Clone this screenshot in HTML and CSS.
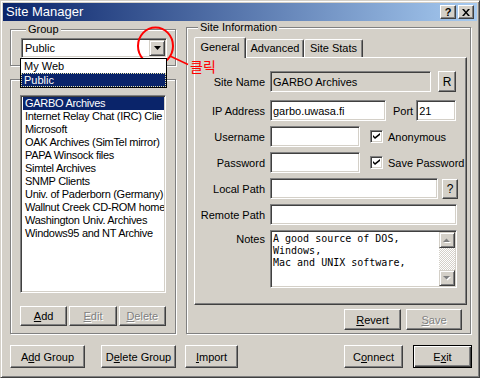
FILE: index.html
```html
<!DOCTYPE html>
<html lang="en">
<head>
    <meta charset="UTF-8">
    <title>Site Manager</title>
    <link rel="stylesheet" href="styles.css">
</head>
<body>
    <div class="window">
        <div class="titlebar">
            <span class="title">Site Manager</span>
            <div class="title-buttons">
                <span class="tbtn help">?</span>
                <span class="tbtn close">
                    <svg width="8" height="7" viewBox="0 0 8 7"><path d="M0 0h2l2 2.5L6 0h2L5 3.5 8 7H6L4 4.5 2 7H0l3-3.5z" fill="#000"/></svg>
                </span>
            </div>
        </div>

        <div class="client">
            <div class="panes">
                <div class="left">
                    <fieldset class="group group-top">
                        <legend>Group</legend>
                        <div class="combo">
                            <span class="combo-text">Public</span>
                            <span class="combo-btn">
                                <svg width="7" height="4" viewBox="0 0 7 4"><path d="M0 0h7L3.5 4z" fill="#000"/></svg>
                            </span>
                            <ul class="combo-list">
                                <li>My Web</li>
                                <li class="sel">Public</li>
                            </ul>
                        </div>
                    </fieldset>

                    <fieldset class="group group-sites">
                        <ul class="listbox">
                            <li class="sel">GARBO Archives</li>
                            <li>Internet Relay Chat (IRC) Clie</li>
                            <li>Microsoft</li>
                            <li>OAK Archives (SimTel mirror)</li>
                            <li>PAPA Winsock files</li>
                            <li>Simtel Archives</li>
                            <li>SNMP Clients</li>
                            <li>Univ. of Paderborn (Germany)</li>
                            <li>Wallnut Creek CD-ROM home</li>
                            <li>Washington Univ. Archives</li>
                            <li>Windows95 and NT Archive</li>
                        </ul>
                        <div class="list-buttons">
                            <button class="btn"><u>A</u>dd</button>
                            <button class="btn disabled"><u>E</u>dit</button>
                            <button class="btn disabled"><u>D</u>elete</button>
                        </div>
                    </fieldset>
                </div>

                <fieldset class="group site-info">
                    <legend>Site Information</legend>
                    <div class="tabs">
                        <span class="tab active tab-general">General</span>
                        <span class="tab tab-advanced">Advanced</span>
                        <span class="tab tab-stats">Site Stats</span>
                    </div>
                    <div class="tab-panel">
                        <div class="row first">
                            <label class="lbl">Site Name</label>
                            <input class="edit readonly w-name" value="GARBO Archives" readonly>
                            <button class="btn small btn-r">R</button>
                        </div>
                        <div class="row">
                            <label class="lbl">IP Address</label>
                            <input class="edit w-ip" value="garbo.uwasa.fi">
                            <label class="port-lbl">Port</label>
                            <input class="edit w-port" value="21">
                        </div>
                        <div class="row">
                            <label class="lbl">Username</label>
                            <input class="edit w-user" value="">
                            <span class="check">
                                <span class="box"><svg width="7" height="7" viewBox="0 0 7 7"><path d="M0 2l2 2 5-4v2L2 6 0 4z" fill="#000"/></svg></span>
                                Anonymous
                            </span>
                        </div>
                        <div class="row">
                            <label class="lbl">Password</label>
                            <input class="edit w-user" value="">
                            <span class="check">
                                <span class="box"><svg width="7" height="7" viewBox="0 0 7 7"><path d="M0 2l2 2 5-4v2L2 6 0 4z" fill="#000"/></svg></span>
                                Save Password
                            </span>
                        </div>
                        <div class="row">
                            <label class="lbl">Local Path</label>
                            <input class="edit w-local" value="">
                            <button class="btn small btn-q">?</button>
                        </div>
                        <div class="row">
                            <label class="lbl">Remote Path</label>
                            <input class="edit w-remote" value="">
                        </div>
                        <div class="row notes-row">
                            <label class="lbl">Notes</label>
                            <div class="notes">
                                <div class="notes-text">A good source of DOS,<br>Windows,<br>Mac and UNIX software,</div>
                                <div class="vscroll">
                                    <span class="sb-btn">
                                        <svg width="8" height="5" viewBox="0 0 8 5"><path d="M1 5h7L4.5 1.5z" fill="#fff"/><path d="M0 4h7L3.5 0.5z" fill="#808080"/></svg>
                                    </span>
                                    <span class="sb-track"></span>
                                    <span class="sb-btn">
                                        <svg width="8" height="5" viewBox="0 0 8 5"><path d="M1 1h7L4.5 4.5z" fill="#fff"/><path d="M0 0h7L3.5 3.5z" fill="#808080"/></svg>
                                    </span>
                                </div>
                            </div>
                        </div>
                    </div>
                    <div class="panel-buttons">
                        <button class="btn w-revert"><u>R</u>evert</button>
                        <button class="btn disabled w-save"><u>S</u>ave</button>
                    </div>
                </fieldset>
            </div>

            <div class="footer">
                <button class="btn w-group">A<u>d</u>d Group</button>
                <button class="btn w-group del-group">D<u>e</u>lete Group</button>
                <button class="btn w-import"><u>I</u>mport</button>
                <span class="spacer"></span>
                <button class="btn w-dlg">C<u>o</u>nnect</button>
                <button class="btn default w-dlg">E<u>x</u>it</button>
            </div>
        </div>

        <svg class="callout" width="62" height="48" viewBox="0 0 62 48">
            <ellipse cx="25.5" cy="24" rx="17.5" ry="18.5" fill="none" stroke="#ff0000" stroke-width="2"/>
            <line x1="40" y1="34" x2="58" y2="42.5" stroke="#ff0000" stroke-width="1.5"/>
        </svg>
        <span class="callout-text">클릭</span>
    </div>
</body>
</html>
```

FILE: styles.css
```css
* {
    box-sizing: border-box;
}

body {
    margin: 0;
    background: #d4d0c8;
    font-family: "Liberation Sans", Arial, sans-serif;
    font-size: 11px;
    color: #000;
}

.window {
    position: relative;
    width: 480px;
    height: 378px;
    background: #d4d0c8;
    border: 1px solid;
    border-color: #d4d0c8 #404040 #404040 #d4d0c8;
    box-shadow: inset 1px 1px #fff, inset -1px -1px #808080;
    padding: 2px;
}

/* title bar */
.titlebar {
    height: 18px;
    display: flex;
    align-items: center;
    justify-content: space-between;
    background: linear-gradient(90deg, #0a246a, #a6caf0);
    padding: 0 3px;
}

.title {
    color: #fff;
    font-size: 13px;
    line-height: 18px;
}

.title-buttons {
    display: flex;
    gap: 2px;
}

.tbtn {
    width: 16px;
    height: 14px;
    background: #d4d0c8;
    border: 1px solid;
    border-color: #fff #404040 #404040 #fff;
    box-shadow: inset -1px -1px #808080;
    display: flex;
    align-items: center;
    justify-content: center;
}

.help {
    font-weight: bold;
    font-size: 11px;
    line-height: 12px;
}

/* layout */
.client {
    padding: 0 3px 0 7px;
}

.panes {
    display: flex;
    gap: 10px;
}

.left {
    width: 166px;
    display: flex;
    flex-direction: column;
}

.group {
    margin: 0;
    padding: 0;
    min-width: 0;
    border: 1px solid #808080;
    box-shadow: inset 1px 1px #fff, 1px 1px #fff;
}

.group legend {
    padding: 0 2px;
    line-height: 13px;
    background: #d4d0c8;
}

.group-top {
    margin-top: 2px;
    padding: 0 8px 7px 10px;
}

.group-top legend {
    margin-left: 5px;
}

.group-sites {
    margin-top: 13px;
    padding: 15px 9px 7px 9px;
}

.site-info {
    width: 285px;
    padding: 0 3px 3px 7px;
}

.site-info legend {
    margin-left: 4px;
}

/* combo box */
.combo {
    position: relative;
    height: 20px;
    margin-top: 2px;
    background: #fff;
    border: 1px solid;
    border-color: #808080 #fff #fff #808080;
    box-shadow: inset 1px 1px #404040, inset -1px -1px #d4d0c8;
    display: flex;
    align-items: center;
    justify-content: space-between;
    padding-left: 3px;
}

.combo-btn {
    width: 16px;
    height: 16px;
    background: #d4d0c8;
    border: 1px solid;
    border-color: #d4d0c8 #404040 #404040 #d4d0c8;
    box-shadow: inset 1px 1px #fff, inset -1px -1px #808080;
    display: flex;
    align-items: center;
    justify-content: center;
    margin-right: 1px;
}

.combo-list {
    position: absolute;
    z-index: 5;
    top: 19px;
    left: -2px;
    width: 147px;
    margin: 0;
    padding: 0;
    list-style: none;
    background: #fff;
    border: 1px solid #000;
}

.combo-list li {
    height: 14px;
    line-height: 14px;
    padding-left: 3px;
}

.combo-list li.sel {
    background: #0a246a;
    color: #fff;
    outline: 1px dotted #e8e4a8;
    outline-offset: -1px;
}

/* list box */
.listbox {
    list-style: none;
    margin: 0;
    padding: 1px 1px 1px 2px;
    height: 198px;
    overflow: hidden;
    background: #fff;
    border: 1px solid;
    border-color: #808080 #fff #fff #808080;
    box-shadow: inset 1px 1px #404040, inset -1px -1px #d4d0c8;
}

.listbox li {
    height: 13px;
    line-height: 13px;
    padding-left: 2px;
    white-space: nowrap;
    overflow: hidden;
    letter-spacing: -0.3px;
}

.listbox li.sel {
    background: #0a246a;
    color: #fff;
}

.list-buttons {
    display: flex;
    gap: 2px;
    margin-top: 13px;
}

.list-buttons .btn {
    flex: 1;
    height: 20px;
}

/* buttons */
.btn {
    height: 21px;
    padding: 0;
    background: #d4d0c8;
    border: 1px solid;
    border-color: #fff #404040 #404040 #fff;
    box-shadow: inset -1px -1px #808080;
    font-family: inherit;
    font-size: 11px;
    color: #000;
    display: flex;
    align-items: center;
    justify-content: center;
    white-space: nowrap;
}

.btn.disabled {
    color: #808080;
    text-shadow: 1px 1px #fff;
}

.btn.default {
    border-color: #000;
    box-shadow: inset 1px 1px #fff, inset -1px -1px #404040, inset -2px -2px #808080;
}

.btn.small {
    font-size: 12px;
}

.btn-r {
    width: 18px;
    margin-left: 7px;
}

.btn-q {
    width: 16px;
    height: 20px;
    margin-left: 4px;
}

/* tabs */
.tabs {
    display: flex;
    align-items: flex-end;
    height: 20px;
    margin-top: 3px;
    position: relative;
    z-index: 1;
}

.tab {
    height: 18px;
    line-height: 16px;
    text-align: center;
    flex-shrink: 0;
    background: #d4d0c8;
    border: 1px solid;
    border-bottom: none;
    border-color: #fff #404040 transparent #fff;
    box-shadow: inset -1px 0 #808080;
    border-radius: 2px 2px 0 0;
}

.tab.active {
    height: 21px;
    line-height: 18px;
    margin-bottom: -1px;
}

.tab-general { width: 52px; }
.tab-advanced { width: 58px; }
.tab-stats { width: 59px; }

.tab-panel {
    height: 248px;
    border: 1px solid;
    border-color: #fff #404040 #404040 #fff;
    box-shadow: inset -1px -1px #808080;
    padding-top: 13px;
    display: flex;
    flex-direction: column;
    gap: 5px;
}

.row {
    display: flex;
    align-items: center;
    height: 21px;
}

.row.first {
    margin-bottom: 3px;
}

.lbl {
    width: 70px;
    margin-right: 5px;
    text-align: right;
    flex-shrink: 0;
}

.edit {
    height: 21px;
    padding: 0 2px;
    background: #fff;
    border: 1px solid;
    border-color: #808080 #fff #fff #808080;
    box-shadow: inset 1px 1px #404040, inset -1px -1px #d4d0c8;
    font-family: inherit;
    font-size: 11px;
    color: #000;
    outline: none;
}

.edit.readonly {
    background: #d4d0c8;
}

.w-name { width: 161px; }
.w-ip { width: 116px; }
.w-port { width: 40px; margin-left: 3px; }
.w-user { width: 90px; }
.w-local { width: 168px; }
.w-remote { width: 187px; }

.port-lbl {
    margin-left: 7px;
}

.check {
    display: flex;
    align-items: center;
    gap: 5px;
    margin-left: 10px;
}

.box {
    width: 13px;
    height: 13px;
    background: #fff;
    border: 1px solid;
    border-color: #808080 #fff #fff #808080;
    box-shadow: inset 1px 1px #404040, inset -1px -1px #d4d0c8;
    display: flex;
    align-items: center;
    justify-content: center;
}

/* notes */
.notes-row {
    align-items: flex-start;
    height: 58px;
}

.notes-row .lbl {
    padding-top: 3px;
}

.notes {
    width: 187px;
    height: 58px;
    display: flex;
    padding: 1px;
    background: #fff;
    border: 1px solid;
    border-color: #808080 #fff #fff #808080;
    box-shadow: inset 1px 1px #404040, inset -1px -1px #d4d0c8;
}

.notes-text {
    flex: 1;
    padding: 1px 0 0 1px;
    font-family: "DejaVu Sans Mono", monospace;
    font-size: 10px;
    line-height: 12px;
}

.vscroll {
    width: 16px;
    display: flex;
    flex-direction: column;
}

.sb-btn {
    height: 16px;
    background: #d4d0c8;
    border: 1px solid;
    border-color: #d4d0c8 #404040 #404040 #d4d0c8;
    box-shadow: inset 1px 1px #fff, inset -1px -1px #808080;
    display: flex;
    align-items: center;
    justify-content: center;
}

.sb-track {
    flex: 1;
    background: repeating-conic-gradient(#fff 0 25%, #d4d0c8 0 50%) 0 0 / 2px 2px;
}

.panel-buttons {
    display: flex;
    justify-content: flex-end;
    gap: 5px;
    margin-top: 4px;
    padding-right: 5px;
}

.w-revert { width: 57px; }
.w-save { width: 56px; }

/* footer */
.footer {
    display: flex;
    margin-top: 11px;
    padding-right: 2px;
}

.footer .btn {
    height: 23px;
}

.w-group { width: 75px; }
.del-group { margin-left: 16px; }
.w-import { width: 53px; margin-left: 9px; }
.w-dlg { width: 59px; }
.w-dlg + .w-dlg { margin-left: 10px; }

.spacer {
    flex: 1;
}

/* red call-out */
.callout {
    position: absolute;
    left: 129px;
    top: 21px;
}

.callout-text {
    position: absolute;
    left: 189px;
    top: 57px;
    color: #ff0000;
    font-family: "Noto Sans CJK KR", sans-serif;
    font-size: 14px;
    line-height: 16px;
}
```
